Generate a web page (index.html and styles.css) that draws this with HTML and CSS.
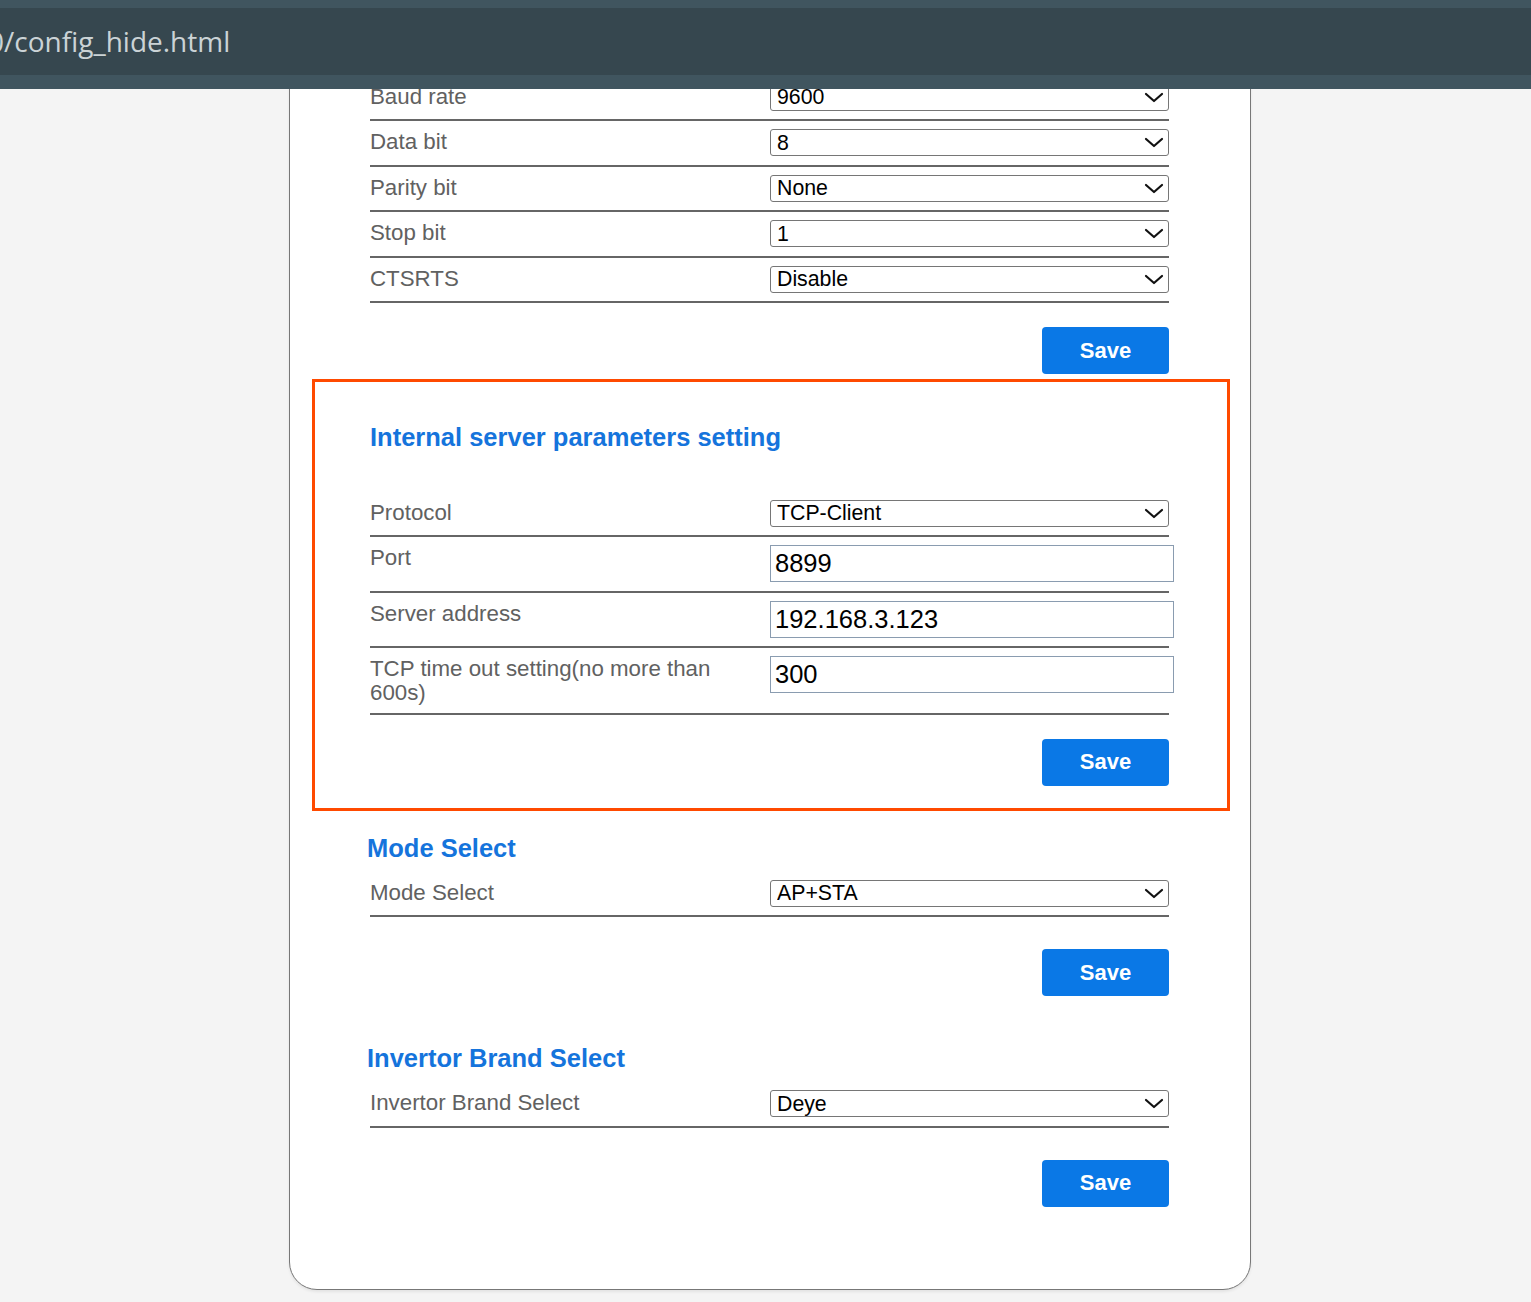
FILE: index.html
```html
<!DOCTYPE html>
<html lang="en">
<head>
<meta charset="utf-8">
<title>config_hide</title>
<link rel="stylesheet" href="styles.css">
</head>
<body>
<header class="topbar"><div class="url">0/config_hide.html</div></header>
<main class="card">
  <section class="group group--first">
    <div class="row"><div class="label">Baud rate</div><div class="select-wrap"><select class="select"><option>9600</option></select><svg class="chev" viewBox="0 0 18 9"><path d="M1 1 L9 8 L17 1"/></svg></div></div>
    <div class="row"><div class="label">Data bit</div><div class="select-wrap"><select class="select"><option>8</option></select><svg class="chev" viewBox="0 0 18 9"><path d="M1 1 L9 8 L17 1"/></svg></div></div>
    <div class="row"><div class="label">Parity bit</div><div class="select-wrap"><select class="select"><option>None</option></select><svg class="chev" viewBox="0 0 18 9"><path d="M1 1 L9 8 L17 1"/></svg></div></div>
    <div class="row"><div class="label">Stop bit</div><div class="select-wrap"><select class="select"><option>1</option></select><svg class="chev" viewBox="0 0 18 9"><path d="M1 1 L9 8 L17 1"/></svg></div></div>
    <div class="row"><div class="label">CTSRTS</div><div class="select-wrap"><select class="select"><option>Disable</option></select><svg class="chev" viewBox="0 0 18 9"><path d="M1 1 L9 8 L17 1"/></svg></div></div>
    <div class="actions"><button class="btn">Save</button></div>
  </section>

  <section class="group group--highlight">
    <h3 class="title title--boxed">Internal server parameters setting</h3>
    <div class="row"><div class="label">Protocol</div><div class="select-wrap"><select class="select"><option>TCP-Client</option></select><svg class="chev" viewBox="0 0 18 9"><path d="M1 1 L9 8 L17 1"/></svg></div></div>
    <div class="row"><div class="label">Port</div><input class="field" type="text" value="8899"></div>
    <div class="row"><div class="label">Server address</div><input class="field" type="text" value="192.168.3.123"></div>
    <div class="row"><div class="label">TCP time out setting(no more than 600s)</div><input class="field" type="text" value="300"></div>
    <div class="actions"><button class="btn">Save</button></div>
  </section>

  <section class="group group--mode">
    <h3 class="title">Mode Select</h3>
    <div class="row"><div class="label">Mode Select</div><div class="select-wrap"><select class="select"><option>AP+STA</option></select><svg class="chev" viewBox="0 0 18 9"><path d="M1 1 L9 8 L17 1"/></svg></div></div>
    <div class="actions actions--loose"><button class="btn">Save</button></div>
  </section>

  <section class="group group--brand">
    <h3 class="title">Invertor Brand Select</h3>
    <div class="row"><div class="label">Invertor Brand Select</div><div class="select-wrap"><select class="select"><option>Deye</option></select><svg class="chev" viewBox="0 0 18 9"><path d="M1 1 L9 8 L17 1"/></svg></div></div>
    <div class="actions actions--loose"><button class="btn">Save</button></div>
  </section>
</main>
</body>
</html>
```
FILE: styles.css
```css
html, body {
  margin: 0;
  padding: 0;
}
body {
  background: #f4f4f4;
  font-family: "Liberation Sans", Arial, sans-serif;
}
.topbar {
  position: fixed;
  top: 0;
  left: 0;
  right: 0;
  height: 89px;
  box-sizing: border-box;
  border-top: 8px solid #40555f;
  border-bottom: 14px solid #40555f;
  background: #36474f;
  z-index: 10;
  overflow: hidden;
}
.url {
  font-family: "Open Sans", "DejaVu Sans", sans-serif;
  font-size: 28px;
  line-height: 67px;
  color: #cbd3d6;
  margin-left: -12px;
  white-space: nowrap;
}
.card {
  width: 960px;
  margin: 60px 0 14px 289px;
  background: #fff;
  border: 1.5px solid #777;
  border-radius: 0 0 28px 28px;
  padding: 14.5px 0 82px;
  box-shadow: 0 2px 3px rgba(0, 0, 0, 0.07);
}
.group {
  padding: 0 80px;
}
.group--highlight {
  margin: 4.5px 20px 0 22px;
  border: 3px solid #ff4a00;
  padding: 40px 57px 22px 55px;
}
.group--mode {
  padding-top: 22px;
}
.group--brand {
  padding-top: 47px;
}
.title {
  margin: 0 0 9px -3px;
  font-size: 25.5px;
  line-height: 30px;
  font-weight: bold;
  color: #1574dc;
}
.title--boxed {
  margin: 0 0 40px 0;
}
.row {
  display: flex;
  align-items: flex-start;
  width: 799px;
  padding: 8px 0 8.5px;
  border-bottom: 2px solid #666;
}
.label {
  width: 400px;
  flex-shrink: 0;
  box-sizing: border-box;
  padding: 1px 50px 0 0;
  font-size: 22.3px;
  line-height: 23.5px;
  color: #616161;
}
.select-wrap {
  position: relative;
  width: 399px;
  height: 27px;
  flex-shrink: 0;
}
.select {
  -webkit-appearance: none;
  appearance: none;
  display: block;
  width: 399px;
  height: 27px;
  box-sizing: border-box;
  margin: 0;
  border: 1px solid #767676;
  border-radius: 3px;
  background: #fff;
  color: #000;
  font-family: "Liberation Sans", Arial, sans-serif;
  font-size: 21.3px;
  padding: 0 0 0 6px;
  outline: none;
}
.chev {
  position: absolute;
  right: 6px;
  top: 9px;
  width: 18px;
  height: 9px;
  overflow: visible;
  pointer-events: none;
}
.chev path {
  fill: none;
  stroke: #111;
  stroke-width: 2.2;
  stroke-linecap: round;
  stroke-linejoin: round;
}
.field {
  display: block;
  flex-shrink: 0;
  width: 404px;
  height: 37px;
  box-sizing: border-box;
  margin: 0;
  border: 1px solid #8a9cb0;
  border-radius: 0;
  padding: 0 4px;
  font-family: "Liberation Sans", Arial, sans-serif;
  font-size: 25.5px;
  color: #000;
  background: #fff;
  outline: none;
}
.actions {
  display: flex;
  justify-content: flex-end;
  width: 799px;
  padding-top: 24px;
}
.actions--loose {
  padding-top: 32px;
}
.btn {
  width: 127px;
  height: 47px;
  border: none;
  border-radius: 4px;
  background: #0a78e6;
  color: #fff;
  font-family: "Liberation Sans", Arial, sans-serif;
  font-size: 22px;
  font-weight: bold;
  padding: 0;
  cursor: pointer;
}
```
